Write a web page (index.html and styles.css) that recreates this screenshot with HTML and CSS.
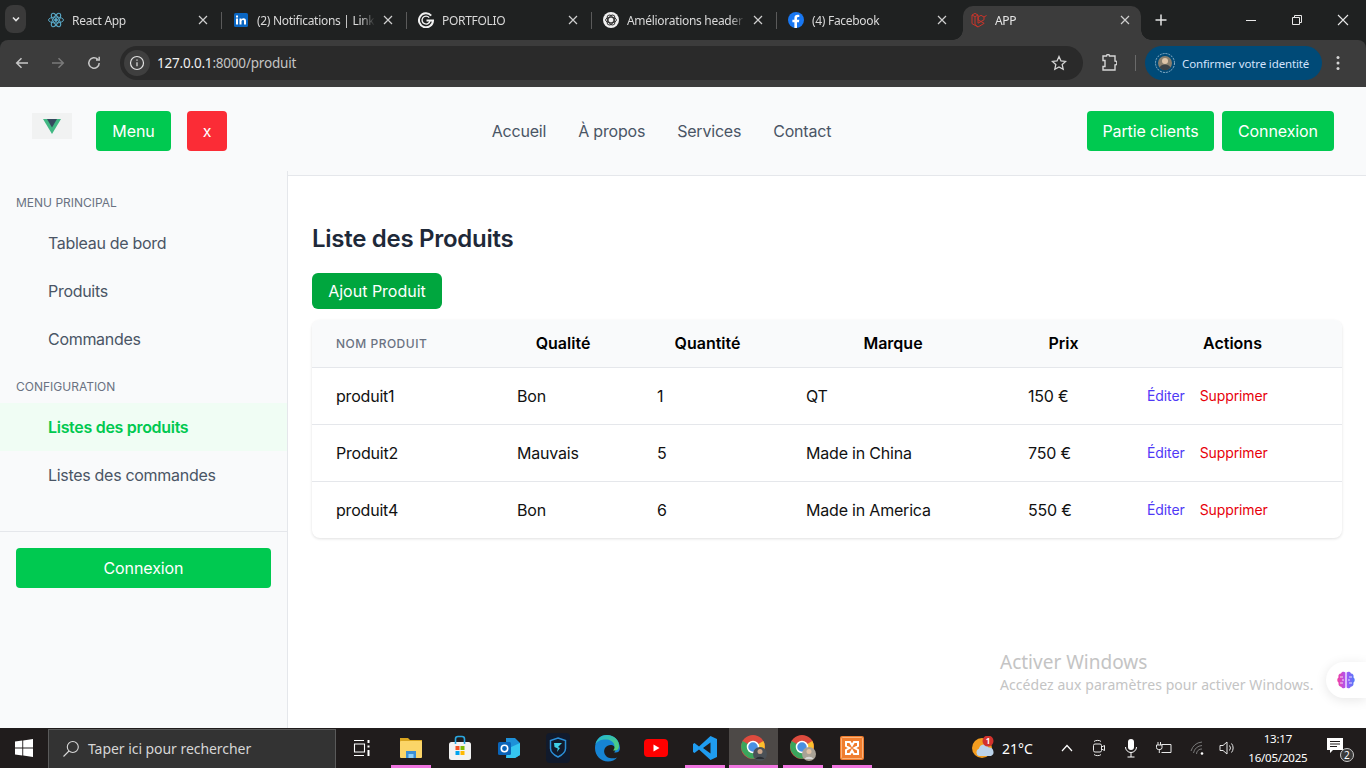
FILE: index.html
```html
<!DOCTYPE html>
<html lang="fr">
<head>
  <meta charset="UTF-8">
  <meta name="viewport" content="width=device-width, initial-scale=1.0">
  <title>APP</title>
  <link rel="stylesheet" href="styles.css">
</head>
<body>

  <!-- browser chrome -->
  <div class="chrome">
  <div class="tabstrip">
    <div class="tab-search"><svg width="10" height="10" viewBox="0 0 10 10"><path d="M2 3.5l3 3 3-3" fill="none" stroke="#e3e3e3" stroke-width="1.6"/></svg></div>
    <div class="tab">
      <svg class="favicon" viewBox="0 0 16 16" fill="none" stroke="#58a6c4" stroke-width="1"><ellipse cx="8" cy="8" rx="7.5" ry="3"/><ellipse cx="8" cy="8" rx="7.5" ry="3" transform="rotate(60 8 8)"/><ellipse cx="8" cy="8" rx="7.5" ry="3" transform="rotate(120 8 8)"/><circle cx="8" cy="8" r="1.4" fill="#58a6c4"/></svg>
      <span class="tab-title">React App</span>
      <svg class="tab-close" viewBox="0 0 10 10"><path d="M1 1l8 8M9 1L1 9"/></svg>
    </div>
    <div class="tab">
      <svg class="favicon" viewBox="0 0 16 16"><rect x="1" y="1" width="14" height="14" rx="1.5" fill="#0a66c2"/><rect x="3" y="6.5" width="2" height="6" fill="#fff"/><rect x="3" y="3.5" width="2" height="2" fill="#fff"/><path d="M6.5 6.5h2v1c.5-.8 1.2-1.2 2.1-1.2 1.6 0 2.4 1 2.4 2.8v3.4h-2V9.5c0-.9-.3-1.4-1-1.4s-1.5.5-1.5 1.5v3h-2z" fill="#fff"/></svg>
      <span class="tab-title">(2) Notifications | LinkedIn</span>
      <svg class="tab-close" viewBox="0 0 10 10"><path d="M1 1l8 8M9 1L1 9"/></svg>
    </div>
    <div class="tab">
      <svg class="favicon" viewBox="0 0 16 16" fill="none" stroke="#f1f1f1" stroke-width="2"><path d="M13.2 3.6A7 7 0 1 0 15 8.6H8.5"/><path d="M11.2 5.6A4 4 0 1 0 12 8.8" stroke-width="1.4"/></svg>
      <span class="tab-title">PORTFOLIO</span>
      <svg class="tab-close" viewBox="0 0 10 10"><path d="M1 1l8 8M9 1L1 9"/></svg>
    </div>
    <div class="tab">
      <svg class="favicon" viewBox="0 0 16 16"><circle cx="8" cy="8" r="8" fill="#f1f1f1"/><g fill="none" stroke="#333" stroke-width="1"><ellipse cx="8" cy="8" rx="5.4" ry="2.8"/><ellipse cx="8" cy="8" rx="5.4" ry="2.8" transform="rotate(60 8 8)"/><ellipse cx="8" cy="8" rx="5.4" ry="2.8" transform="rotate(120 8 8)"/></g></svg>
      <span class="tab-title">Améliorations header</span>
      <svg class="tab-close" viewBox="0 0 10 10"><path d="M1 1l8 8M9 1L1 9"/></svg>
    </div>
    <div class="tab tab-last">
      <svg class="favicon" viewBox="0 0 16 16"><circle cx="8" cy="8" r="8" fill="#1877f2"/><path d="M10.9 10.2l.4-2.4H9V6.3c0-.7.3-1.3 1.3-1.3h1V3c-.5-.1-1.1-.2-1.7-.2-1.9 0-3.2 1.2-3.2 3.2v1.8H4.4v2.4h2V16h2.6v-5.8z" fill="#fff"/></svg>
      <span class="tab-title">(4) Facebook</span>
      <svg class="tab-close" viewBox="0 0 10 10"><path d="M1 1l8 8M9 1L1 9"/></svg>
    </div>
    <div class="tab tab-active">
      <svg class="favicon" viewBox="0 0 16 16" fill="none" stroke="#c8352b" stroke-width="1"><path d="M1 3l3-1.6L7 3v8.2l6-3.4V5l-3-1.7L7.2 5v3l6 3.3L7 15l-6-3.4zM1 3l3 1.7L7 3M4 4.7v7.8l3 2.5M13 5l2.5-1.500"/></svg>
      <span class="tab-title">APP</span>
      <svg class="tab-close" viewBox="0 0 10 10"><path d="M1 1l8 8M9 1L1 9"/></svg>
    </div>
    <div class="tab-new"><svg width="12" height="12" viewBox="0 0 12 12"><path d="M6 .5v11M.5 6h11" stroke="#e3e3e3" stroke-width="1.5"/></svg></div>
    <div class="win-controls">
      <svg width="46" height="12" viewBox="0 0 46 12"><path d="M18 6.5h10" stroke="#e8e8e8"/></svg>
      <svg width="46" height="12" viewBox="0 0 46 12"><path d="M18.5 3.5h7v7h-7zM20.5 3.500v-2h7v7h-2" fill="none" stroke="#e8e8e8"/></svg>
      <svg width="46" height="12" viewBox="0 0 46 12"><path d="M18 1l10 10M28 1L18 11" stroke="#e8e8e8" stroke-width="1.1"/></svg>
    </div>
  </div>

  <div class="toolbar">
    <svg class="tool-icon" viewBox="0 0 16 16" fill="none" stroke="#c7c7c7" stroke-width="1.5"><path d="M14 8H3M7.5 3.2L2.7 8l4.8 4.8"/></svg>
    <svg class="tool-icon" viewBox="0 0 16 16" fill="none" stroke="#7a7a7a" stroke-width="1.5"><path d="M2 8h11M8.5 3.2L13.300 8l-4.800 4.800"/></svg>
    <svg class="tool-icon" viewBox="0 0 16 16" fill="none" stroke="#c7c7c7" stroke-width="1.5"><path d="M13.200 8a5.200 5.200 0 1 1-1.500-3.700M13.200 1.800v3.200h-3.200"/></svg>
    <div class="omnibox">
      <span class="site-info"><svg width="16" height="16" viewBox="0 0 16 16" fill="none" stroke="#e3e3e3" stroke-width="1.2"><circle cx="8" cy="8" r="6.5"/><path d="M8 7.2v4M8 4.4v1.400"/></svg></span>
      <span class="url"><b>127.0.0.1</b>:8000/produit</span>
      <svg class="star" width="16" height="16" viewBox="0 0 16 16"><path d="M8 1.5l2 4.400 4.700.5-3.500 3.200 1 4.700L8 11.900l-4.200 2.400 1-4.700L1.300 6.400 6 5.900z" fill="none" stroke="#d5d5d5" stroke-width="1.3"/></svg>
    </div>
    <svg class="ext-icon" width="16" height="18" viewBox="0 0 16 18"><path d="M2 2h3.500a1.500 1.500 0 0 1 3 0H14v5a1.500 1.500 0 0 1 0 4v5H2v-3.500h2v-6H2z" fill="none" stroke="#d5d5d5" stroke-width="1.4"/></svg>
    <span class="tool-sep"></span>
    <div class="profile">
      <svg width="20" height="20" viewBox="0 0 20 20"><circle cx="10" cy="10" r="9.5" fill="none" stroke="#8fb4cc" stroke-dasharray="2 1"/><circle cx="10" cy="10" r="7" fill="#8a7f6e"/><circle cx="10" cy="8" r="3" fill="#e0c5a8"/><path d="M4.500 14.500a6 5 0 0 1 11 0A7 7 0 0 1 4.500 14.500z" fill="#3d4348"/></svg>
      <span>Confirmer votre identité</span>
    </div>
    <svg class="menu-dots" width="4" height="16" viewBox="0 0 4 16" fill="#d5d5d5"><circle cx="2" cy="2.5" r="1.5"/><circle cx="2" cy="8" r="1.5"/><circle cx="2" cy="13.5" r="1.5"/></svg>
  </div>
  </div>

  <!-- the app -->
  <div class="app">
    <header class="topbar">
      <div class="logo">
        <svg width="18" height="15" viewBox="0 0 18 15"><path d="M0 0h18L9 15z" fill="#41b883"/><path d="M4 0h10L9 8.500z" fill="#35495e"/></svg>
      </div>
      <button class="btn btn-green btn-menu">Menu</button>
      <button class="btn btn-red">x</button>
      <nav class="topnav">
        <a>Accueil</a>
        <a>À propos</a>
        <a>Services</a>
        <a>Contact</a>
      </nav>
      <button class="btn btn-green btn-clients">Partie clients</button>
      <button class="btn btn-green btn-login">Connexion</button>
    </header>

    <div class="body-row">
      <aside class="sidebar">
        <div class="side-label">Menu principal</div>
        <a class="side-link">Tableau de bord</a>
        <a class="side-link">Produits</a>
        <a class="side-link">Commandes</a>
        <div class="side-label side-label-next">Configuration</div>
        <a class="side-link active">Listes des produits</a>
        <a class="side-link">Listes des commandes</a>
        <div class="side-foot">
          <button class="btn btn-green btn-wide">Connexion</button>
        </div>
      </aside>

      <main class="content">
        <h1>Liste des Produits</h1>
        <button class="btn btn-add">Ajout Produit</button>
        <div class="table-card">
          <table>
            <colgroup>
              <col class="c1"><col class="c2"><col class="c3"><col class="c4"><col class="c5"><col class="c6">
            </colgroup>
            <thead>
              <tr>
                <th class="th-name">Nom produit</th>
                <th>Qualité</th>
                <th>Quantité</th>
                <th>Marque</th>
                <th>Prix</th>
                <th>Actions</th>
              </tr>
            </thead>
            <tbody>
              <tr>
                <td>produit1</td><td>Bon</td><td>1</td><td>QT</td><td>150 €</td>
                <td class="actions"><a class="edit">Éditer</a><a class="del">Supprimer</a></td>
              </tr>
              <tr>
                <td>Produit2</td><td>Mauvais</td><td>5</td><td>Made in China</td><td>750 €</td>
                <td class="actions"><a class="edit">Éditer</a><a class="del">Supprimer</a></td>
              </tr>
              <tr>
                <td>produit4</td><td>Bon</td><td>6</td><td>Made in America</td><td>550 €</td>
                <td class="actions"><a class="edit">Éditer</a><a class="del">Supprimer</a></td>
              </tr>
            </tbody>
          </table>
        </div>
      </main>
    </div>

    <div class="watermark">
      <div class="wm-big">Activer Windows</div>
      <div class="wm-small">Accédez aux paramètres pour activer Windows.</div>
    </div>
    <div class="brain">
      <svg width="20" height="20" viewBox="0 0 20 20">
        <defs><linearGradient id="bg" x1="0" x2="1"><stop offset="0" stop-color="#f43fa0"/><stop offset="0.5" stop-color="#a855f7"/><stop offset="1" stop-color="#4f7cf7"/></linearGradient></defs>
        <path d="M9.400 2.500C8 1 5.500 1.500 5 3.500 3 3.500 1.800 5.500 2.600 7.200 .8 8.500.8 11.500 2.600 12.800 2 15 3.500 17 5.300 16.700 6 18.500 8.500 18.800 9.400 17.500zM10.600 2.500C12 1 14.500 1.500 15 3.500 17 3.500 18.200 5.500 17.400 7.200 19.200 8.500 19.200 11.500 17.400 12.800 18 15 16.500 17 14.700 16.700 14 18.500 11.500 18.800 10.600 17.500z" fill="url(#bg)"/>
        <path d="M4 7h3M4 13h3M16 7h-3M16 13h-3M6 10h2M14 10h-2" stroke="#fff" stroke-width=".8"/>
      </svg>
    </div>
  </div>

  <!-- windows taskbar -->
  <footer class="taskbar">
    <div class="start"><svg width="18" height="18" viewBox="0 0 18 18" fill="#fff"><path d="M0 2.600l7.300-1v7H0zM8.200 1.400L18 0v8.600H8.200zM0 9.400h7.300v7L0 15.400zM8.200 9.400H18V18l-9.800-1.400z"/></svg></div>
    <div class="search">
      <svg width="18" height="18" viewBox="0 0 18 18" fill="none" stroke="#d8d8d8" stroke-width="1.1"><circle cx="10.800" cy="7" r="5.500"/><path d="M7 11L1.500 16.500"/></svg>
      <span>Taper ici pour rechercher</span>
    </div>
    <div class="slot"><svg width="18" height="18" viewBox="0 0 18 18" fill="none" stroke="#fff" stroke-width="1.1"><path d="M1 1.500h10M1 16.500h10M1.500 5h10v8h-10z"/><path d="M15.500 1v3M15.500 6.500v2M15.500 11v6" stroke-width="2"/></svg></div>
    <div class="slot lit"><svg width="24" height="22" viewBox="0 0 24 22"><path d="M1 1h8l2 2h12v4H1z" fill="#d9a520"/><rect x="1" y="4" width="22" height="17" rx="1" fill="#fbd568"/><rect x="7" y="14" width="10" height="7" fill="#3a8fd6"/><rect x="9.5" y="17" width="5" height="4" fill="#8fd0f5"/></svg></div>
    <div class="slot"><svg width="24" height="26" viewBox="0 0 24 26"><rect x="1" y="7" width="22" height="18" rx="2.5" fill="#f2f2f2"/><path d="M7.500 9V4a2.500 2.500 0 0 1 2.500-2.500h4A2.500 2.500 0 0 1 16.500 4v5" fill="none" stroke="#2aa7e0" stroke-width="1.6"/><rect x="7.500" y="11" width="4" height="4" fill="#f25022"/><rect x="12.500" y="11" width="4" height="4" fill="#7fba00"/><rect x="7.500" y="16" width="4" height="4" fill="#00a4ef"/><rect x="12.500" y="16" width="4" height="4" fill="#ffb900"/></svg></div>
    <div class="slot"><svg width="24" height="24" viewBox="0 0 24 24"><path d="M9 2l9 0 5 5v12l-5 3H9z" fill="#1e90d8"/><path d="M12 12l11-5v12l-5 3H9z" fill="#35c6f0"/><rect x="1" y="6" width="13" height="13" rx="1.5" fill="#0a64b8"/><circle cx="7.500" cy="12.500" r="3.200" fill="none" stroke="#fff" stroke-width="1.6"/></svg></div>
    <div class="slot"><svg width="24" height="30" viewBox="0 0 24 30"><rect width="24" height="30" rx="4" fill="#111a2c"/><path d="M12 5l7.500 2.500v8c0 4-3.500 6.500-7.500 8.500-4-2-7.500-4.500-7.500-8.500v-8z" fill="none" stroke="#2b8fd8" stroke-width="1.5"/><path d="M8 10h8l-4 4 2 1-3 4 .8-3.500L8.500 14z" fill="#3fd0e8"/></svg></div>
    <div class="slot"><svg width="26" height="30" viewBox="0 0 26 30"><defs><linearGradient id="eg" x1="0" y1="0" x2="1" y2="1"><stop offset="0" stop-color="#1fb6d9"/><stop offset="1" stop-color="#59d36a"/></linearGradient></defs><path d="M13 2C5 2 1 8 1 15c0 8 6 13.500 13 13.500 4 0 7-1.500 9-4-5 2-11 .5-12.500-4-1.500-4.500 2-8.500 6-8.500 3 0 5 2 5 4.500 0 1-.5 2-1.500 2.800 3 1 6-.5 6-4.300C25.500 7 20 2 13 2z" fill="#1684d4"/><path d="M13 2C6 2 2.500 7 1.500 11 4 7 9 6 13 6.500c5 .5 8 4 7.500 8-.1 1-.5 2-1.500 2.800 3 1 6-.5 6-4.300C25 7 20 2 13 2z" fill="url(#eg)"/></svg></div>
    <div class="slot"><svg width="24" height="18" viewBox="0 0 24 18"><rect width="24" height="18" rx="4" fill="#f00"/><path d="M9.500 5.500l6 3.500-6 3.500z" fill="#fff"/></svg></div>
    <div class="slot lit"><svg width="26" height="26" viewBox="0 0 26 26"><path d="M18.500 1L25 4v18l-6.500 3L7 14.500 2.500 18 1 17V9l1.500-1L7 11.500zM18.500 7.500L11 13l7.500 5.500z" fill="#1f9cf0"/></svg></div>
    <div class="slot lit open">
      <svg width="26" height="26" viewBox="0 0 26 26"><circle cx="12" cy="12" r="12" fill="#dd4b3e"/><path d="M12 12L22.400 6a12 12 0 0 1-6 16.500z" fill="#fbc02d"/><path d="M12 12L1.600 6A12 12 0 0 0 16.400 22.800z" fill="#3ba55d"/><circle cx="12" cy="12" r="5.500" fill="#4a90e2" stroke="#fff" stroke-width="1.5"/><circle cx="19" cy="19" r="7" fill="#4b5157"/><circle cx="19" cy="16.500" r="2.500" fill="#caa58a"/><path d="M14.500 24a5 4 0 0 1 9 0z" fill="#2b2e33"/></svg>
    </div>
    <div class="slot lit">
      <svg width="26" height="26" viewBox="0 0 26 26"><circle cx="12" cy="12" r="12" fill="#dd4b3e"/><path d="M12 12L22.400 6a12 12 0 0 1-6 16.500z" fill="#fbc02d"/><path d="M12 12L1.600 6A12 12 0 0 0 16.400 22.800z" fill="#3ba55d"/><circle cx="12" cy="12" r="5.500" fill="#4a90e2" stroke="#fff" stroke-width="1.5"/><circle cx="19" cy="19" r="7" fill="#a9a296"/><circle cx="19" cy="16.500" r="2.500" fill="#e0c2a5"/><path d="M14.500 24a5 4 0 0 1 9 0z" fill="#d8d8d8"/></svg>
    </div>
    <div class="slot lit"><svg width="24" height="24" viewBox="0 0 24 24"><rect width="24" height="24" rx="2" fill="#f07d2e"/><rect x="1.500" y="1.500" width="21" height="21" rx="1" fill="none" stroke="#f9b27a"/><path d="M6 6h4l2 3.500L14 6h4v4l-3.500 2 3.500 2v4h-4l-2-3.500L10 18H6v-4l3.500-2L6 10z" fill="none" stroke="#fff" stroke-width="2"/></svg></div>

    <div class="tray">
      <svg class="weather" width="24" height="24" viewBox="0 0 24 24"><circle cx="11" cy="12" r="10" fill="#f39c1f"/><path d="M8 20a4 4 0 0 1 0-7.500 5 5 0 0 1 9.500-1A4.500 4.500 0 0 1 20 20z" fill="#bcd3ea"/><circle cx="17" cy="5" r="5.500" fill="#d2322d"/><text x="17" y="7.500" class="badge-num">1</text></svg>
      <span class="temp">21°C</span>
      <svg class="tray-chev" width="12" height="8" viewBox="0 0 12 8"><path d="M1 7l5-5.500L11 7" fill="none" stroke="#fff" stroke-width="1.2"/></svg>
      <svg class="tray-meet" width="14" height="18" viewBox="0 0 14 18" fill="none" stroke="#e8e8e8"><rect x="1.500" y="5" width="8" height="8" rx="1.5"/><path d="M9.500 8l3-1.500v5l-3-1.500M2 2.500C3.500 1 8 1 9 2.500M2 15.500c1.500 1.500 6 1.500 7 0"/></svg>
      <svg class="tray-mic" width="14" height="20" viewBox="0 0 14 20"><rect x="4" y="1" width="6" height="11" rx="3" fill="#fff"/><path d="M1.500 9a5.500 5.500 0 0 0 11 0M7 14.500V19M3.500 19h7" fill="none" stroke="#fff"/></svg>
      <svg class="tray-pow" width="16" height="16" viewBox="0 0 16 16" fill="none" stroke="#e8e8e8"><path d="M5.500 4.500H15v8H5.500M2 2v3M4.500 2v3M.5 5h5.500v2.500a2 2 0 0 1-2 2h-1.500a2 2 0 0 1-2-2zM3.300 9.500V13"/></svg>
      <svg class="tray-wifi" width="16" height="16" viewBox="0 0 16 16" fill="none" stroke="#7a7a7a"><path d="M1 11a13 13 0 0 1 11-9M3.500 13a9 9 0 0 1 8.500-7.500M6.500 14a5 5 0 0 1 5.500-5"/><circle cx="12" cy="13.500" r="1.300" fill="#fff" stroke="none"/></svg>
      <svg class="tray-vol" width="16" height="16" viewBox="0 0 16 16" fill="none" stroke="#e8e8e8"><path d="M1 5.500h3L8 2v12l-4-3.500H1zM10.500 5.500a4 4 0 0 1 0 5M12.500 3.500a7 7 0 0 1 0 9"/></svg>
      <div class="clock"><div>13:17</div><div>16/05/2025</div></div>
      <div class="notif">
        <svg width="16" height="16" viewBox="0 0 16 16"><path d="M0 0h16v12H6l-3 3v-3H0z" fill="#fff"/><path d="M3 3.500h10M3 6h10M3 8.500h7" stroke="#201c1c"/></svg>
        <span class="notif-count">2</span>
      </div>
    </div>
  </footer>

</body>
</html>
```

FILE: styles.css
```css
* { box-sizing: border-box; }
html, body { margin: 0; height: 100%; }
body { width: 1366px; height: 768px; overflow: hidden; font-family: Inter, "Liberation Sans", sans-serif; background: #fff; }
button { font-family: inherit; border: 0; cursor: pointer; }

/* chrome */
.chrome { background: #1f2121; }
.tabstrip { display: flex; align-items: flex-end; height: 40px; padding-left: 5px; font-family: "Noto Sans", sans-serif; font-size: 12px; letter-spacing: -.3px; color: #d9d9d9; }
.tab-search { width: 21px; height: 28px; margin: 0 17px 7px 0; background: #3a3a3a; border-radius: 8px; display: flex; align-items: center; justify-content: center; }
.tab { width: 185px; height: 34px; display: flex; align-items: center; padding: 0 20px 6px 5px; position: relative; }
.tab::after { content: ""; position: absolute; right: 6px; top: 6px; width: 1px; height: 17px; background: #5a5a5a; }
.tab-last { width: 180px; padding-right: 16px; }
.tab-last::after { display: none; }
.favicon { width: 16px; height: 16px; flex: none; margin-right: 8px; }
.tab-title { flex: 1; white-space: nowrap; overflow: hidden; min-width: 0; -webkit-mask-image: linear-gradient(to right, #000 88%, transparent); mask-image: linear-gradient(to right, #000 88%, transparent); }
.tab-close { width: 10px; height: 10px; flex: none; margin-left: 8px; fill: none; stroke: #cfcfcf; stroke-width: 1.2; }
.tab-active { width: 178px; padding-left: 8px; padding-right: 11px; background: #3c3c3c; border-radius: 10px 10px 0 0; color: #e6e6e6; }
.tab-active::before, .tab-active::after { content: ""; position: absolute; top: auto; bottom: 0; width: 10px; height: 10px; background: radial-gradient(circle at 0 0, transparent 9.5px, #3c3c3c 10px); }
.tab-active::before { left: -10px; }
.tab-active::after { left: auto; right: -10px; background: radial-gradient(circle at 100% 0, transparent 9.5px, #3c3c3c 10px); }
.tab-new { width: 40px; height: 34px; display: flex; align-items: center; justify-content: center; padding-bottom: 6px; }
.win-controls { margin-left: auto; display: flex; height: 40px; align-items: center; padding-bottom: 1px; }

.toolbar { display: flex; align-items: center; height: 47px; background: #3c3c3c; border-radius: 8px 8px 0 0; padding: 0 0 1px 14px; }
.tool-icon { width: 16px; height: 16px; margin-right: 20px; flex: none; }
.tool-icon:nth-child(3) { margin-right: 18px; }
.omnibox { width: 963px; height: 34px; background: #2a2a2a; border-radius: 17px; display: flex; align-items: center; padding: 0 16px 0 4px; font-family: "Noto Sans", sans-serif; font-size: 13.5px; letter-spacing: -.2px; color: #c4c4c4; }
.site-info { width: 26px; height: 26px; border-radius: 13px; background: #3f3f3f; display: flex; align-items: center; justify-content: center; margin-right: 7px; }
.url b { font-weight: 400; color: #efefef; }
.star { margin-left: auto; }
.ext-icon { margin-left: 18px; }
.tool-sep { width: 1px; height: 16px; background: #6a6a6a; margin: 0 9px 0 18px; }
.profile { width: 177px; height: 34px; background: #004a77; border-radius: 17px; display: flex; align-items: center; gap: 7px; padding-left: 10px; font-family: "Noto Sans", sans-serif; font-size: 11.5px; letter-spacing: -.13px; color: #d3e3fd; white-space: nowrap; }
.menu-dots { margin-left: 14px; }

/* app */
.app { height: 641px; position: relative; display: flex; flex-direction: column; overflow: hidden; }
.topbar { height: 89px; flex: none; display: flex; align-items: flex-start; padding: 24px 32px 0; background: #f9fafb; border-bottom: 1px solid #e5e7eb; }
.logo { width: 40px; height: 26px; margin: 2px 24px 0 0; background: #f1f2f2; display: flex; justify-content: center; align-items: center; }
.btn { height: 40px; border-radius: 4px; color: #fff; font-size: 16px; line-height: 40px; padding: 0; font-weight: 400; letter-spacing: -.1px; }
.btn-green { background: #00c950; }
.btn-red { background: #fb2c36; width: 40px; margin-left: 16px; }
.btn-menu { width: 75px; }
.btn-clients { width: 127px; margin-right: 8px; }
.btn-login { width: 112px; }
.topnav { flex: 1; display: flex; justify-content: center; gap: 32px; height: 40px; align-items: center; padding-left: 9px; font-size: 16px; letter-spacing: -.2px; color: #4a5565; }

.body-row { flex: 1; display: flex; min-height: 0; }
.sidebar { width: 288px; flex: none; margin-top: -5px; background: #f9fafb; border-right: 1px solid #e5e7eb; display: flex; flex-direction: column; padding-top: 19px; }
.side-label { height: 24px; line-height: 26px; margin-bottom: 5px; padding-left: 16px; font-size: 12px; color: #6a7282; text-transform: uppercase; }
.side-label-next { margin-top: 11px; }
.side-link { height: 48px; line-height: 48px; padding-left: 48px; font-size: 16px; letter-spacing: -.3px; color: #4a5565; }
.side-link.active { background: #f0fdf4; color: #00c950; font-weight: 600; }
.side-foot { margin-top: 32px; border-top: 1px solid #e5e7eb; padding: 16px 16px 0; }
.btn-wide { width: 255px; display: block; }

.content { flex: 1; min-width: 0; background: #fff; padding: 47px 24px 0; }
.content h1 { margin: 0; font-size: 24px; line-height: 32px; font-weight: 600; letter-spacing: -.28px; color: #1e2939; }
.btn-add { display: block; margin-top: 18px; width: 130px; height: 36px; line-height: 36px; border-radius: 6px; background: #00a63e; color: #fff; font-size: 16px; letter-spacing: 0; }
.table-card { width: 1030px; margin-top: 11px; border-radius: 8px; box-shadow: 0 1px 3px rgba(0,0,0,.12); overflow: hidden; background: #fff; }
table { width: 100%; border-collapse: collapse; table-layout: fixed; font-size: 16px; color: #111; }
.c1 { width: 181px; } .c2 { width: 140px; } .c3 { width: 149px; } .c4 { width: 222px; } .c5 { width: 119px; } .c6 { width: 219px; }
th { height: 47px; background: #f9fafb; border-bottom: 1px solid #e5e7eb; font-size: 16px; font-weight: 600; color: #000; text-align: center; padding: 0; }
th.th-name { text-align: left; padding-left: 24px; font-size: 12px; font-weight: 500; color: #6a7282; text-transform: uppercase; letter-spacing: .5px; }
td { height: 57px; padding: 0 0 0 24px; border-bottom: 1px solid #e5e7eb; letter-spacing: -.2px; }
tbody tr:last-child td { border-bottom: 0; }
.actions { font-size: 14px; letter-spacing: -.1px; }
.edit { color: #4f39f6; margin-right: 15px; }
.del { color: #e7000b; }

.watermark { position: absolute; left: 1000px; top: 563px; color: #c4c4c4; font-family: "Noto Sans", sans-serif; white-space: nowrap; }
.wm-big { font-size: 19px; line-height: 24px; margin-bottom: 1px; }
.wm-small { font-size: 14px; line-height: 20px; letter-spacing: .07px; }
.brain { position: absolute; right: 0; top: 575px; width: 40px; height: 36px; background: #fff; border-radius: 18px 0 0 18px; box-shadow: 0 2px 12px rgba(0,0,0,.1); display: flex; align-items: center; padding-left: 10px; }

/* taskbar */
.taskbar { height: 40px; background: #201c1c; display: flex; align-items: center; font-family: "Noto Sans", sans-serif; color: #fff; }
.start { width: 48px; flex: none; display: flex; justify-content: center; }
.search { width: 288px; height: 39px; margin: 1px 1px 0 0; flex: none; background: #333; border: 1px solid #5a5a5a; border-bottom: 0; display: flex; align-items: center; gap: 8px; padding: 0 0 1px 13px; font-size: 14px; letter-spacing: -.05px; color: #d6d6d6; }
.slot { width: 49px; height: 40px; flex: none; display: flex; align-items: center; justify-content: center; position: relative; }
.lit::after { content: ""; position: absolute; bottom: 0; left: 5px; right: 4px; height: 3px; background: #f075e0; }
.open { background: #4d4947; }
.open::after { left: 0; right: 0; }
.tray { flex: 1; display: flex; align-items: center; height: 40px; }
.weather { margin-left: 95px; flex: none; }
.badge-num { font-size: 8px; fill: #fff; text-anchor: middle; font-family: "Noto Sans", sans-serif; font-weight: 700; }
.temp { font-size: 14px; margin-left: 7px; }
.tray-chev { margin-left: 28px; }
.tray-meet { margin-left: 19px; }
.tray-mic { margin-left: 18px; }
.tray-pow { margin-left: 18px; }
.tray-wifi { margin-left: 18px; }
.tray-vol { margin-left: 13px; }
.clock { width: 62px; margin-left: 12px; text-align: center; font-size: 11.5px; letter-spacing: -.2px; line-height: 19px; white-space: nowrap; }
.notif { margin-left: 18px; width: 24px; height: 24px; position: relative; padding-top: 1px; }
.notif-count { position: absolute; right: -3px; bottom: -2px; width: 14px; height: 14px; border-radius: 7px; background: #3a3a3a; border: 1px solid #ccc; font-size: 10px; line-height: 12px; text-align: center; }
```
